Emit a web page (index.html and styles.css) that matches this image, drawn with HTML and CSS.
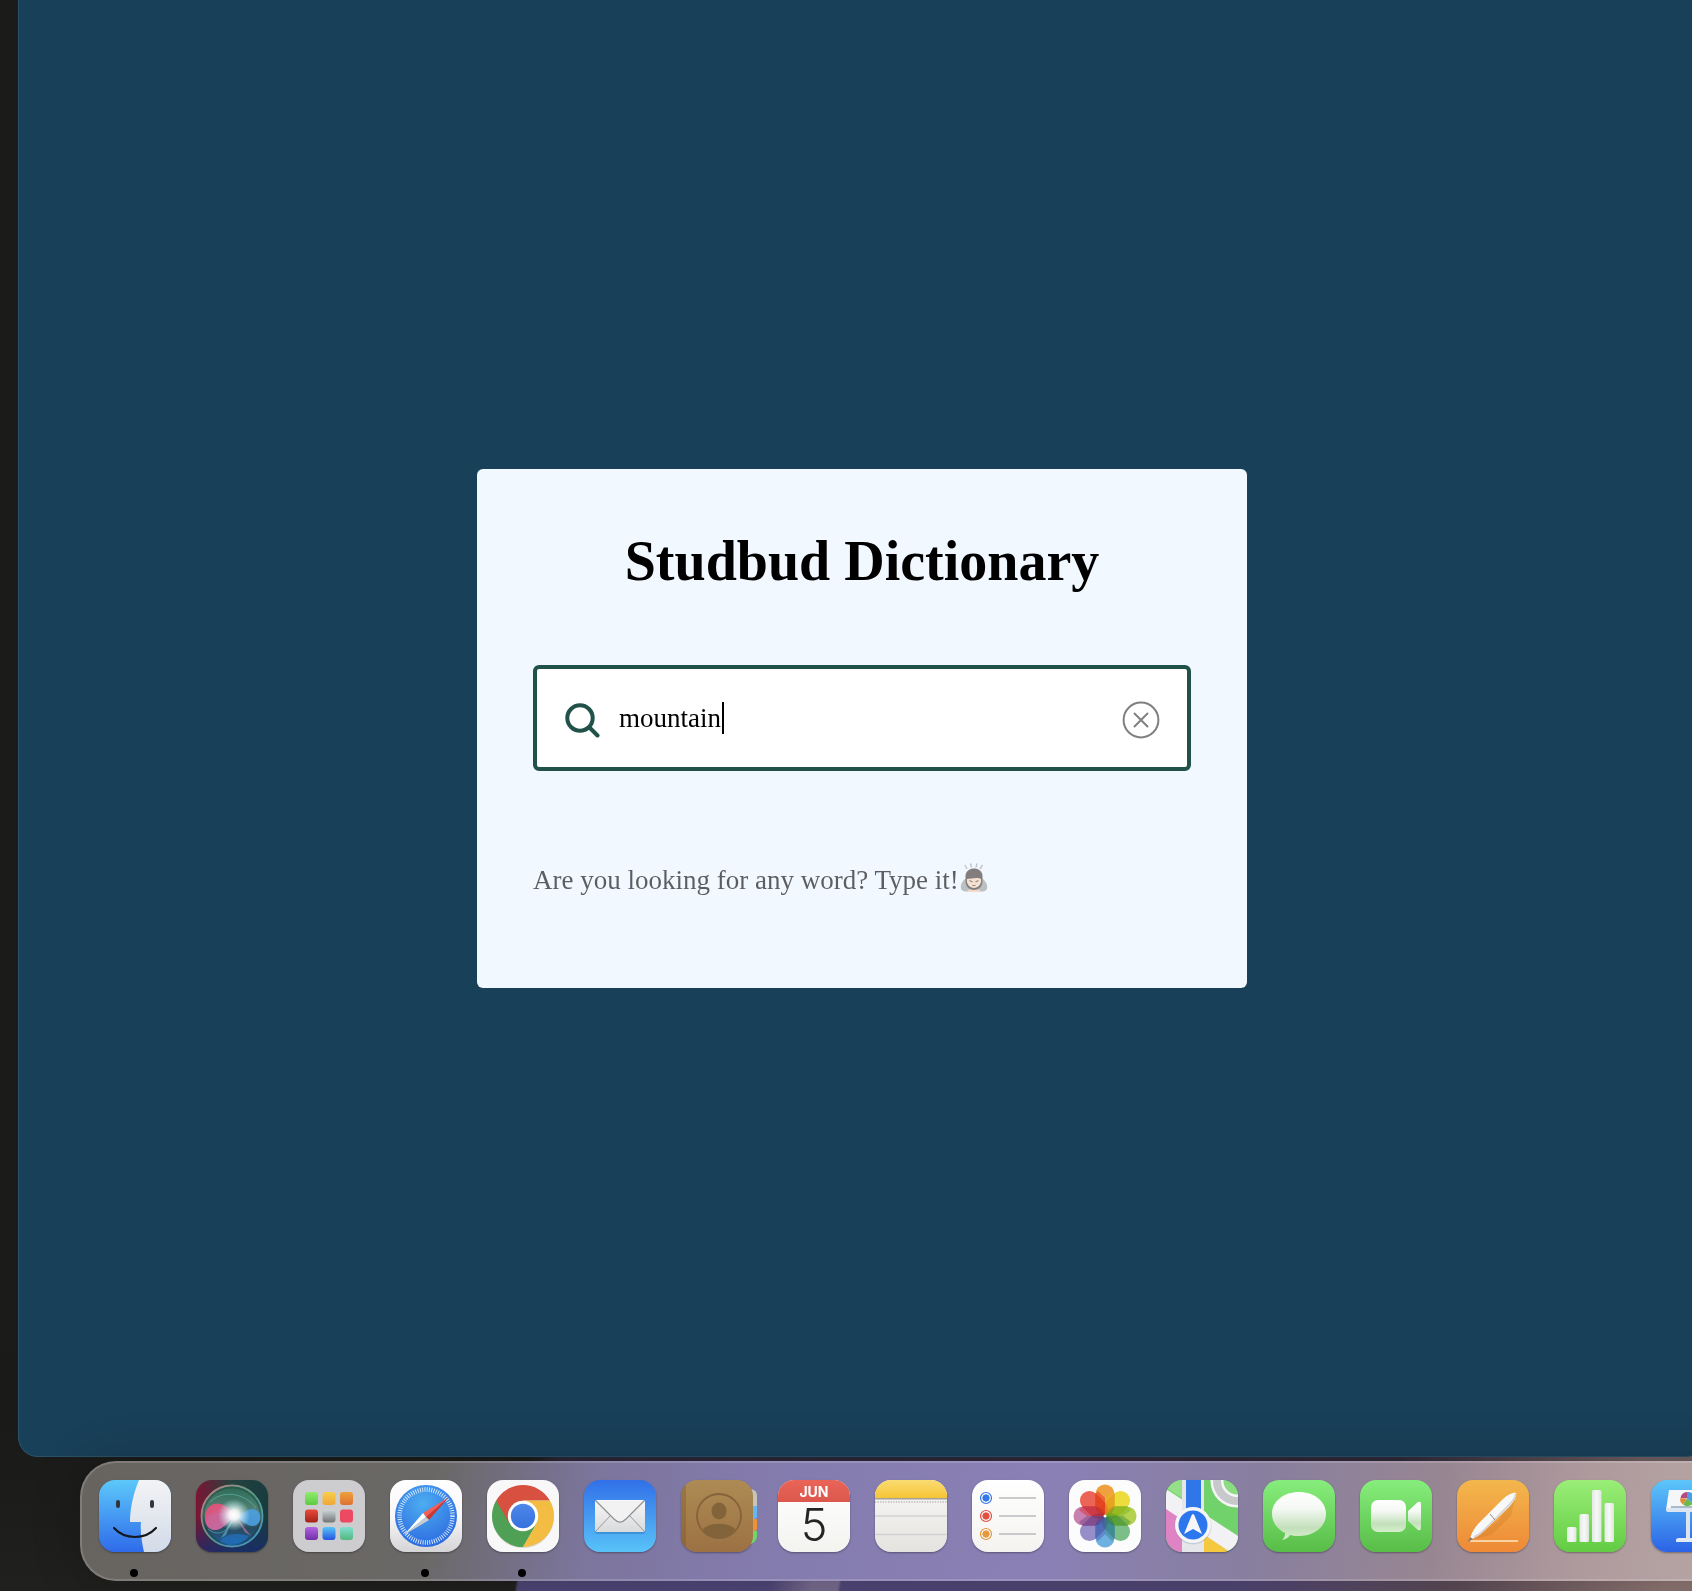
FILE: index.html
```html
<!DOCTYPE html>
<html lang="en">
<head>
<meta charset="utf-8">
<meta name="viewport" content="width=device-width, initial-scale=1">
<title>Studbud Dictionary</title>
<link rel="stylesheet" href="styles.css">
</head>
<body>
<main class="window">
  <section class="card">
    <h1 class="card-title">Studbud Dictionary</h1>
    <form class="search">
      <svg class="search-icon" viewBox="0 0 36 36" aria-hidden="true"><circle cx="15" cy="16" r="12.7"/><path d="M24.500 25.500 L32.500 33.500"/></svg>
      <div class="search-field">
        <input class="search-input" type="text" value="mountain" aria-label="Search a word" autocomplete="off" spellcheck="false">
        <span class="caret"></span>
      </div>
      <button class="clear" type="button" aria-label="Clear search">
        <svg class="clear-icon" viewBox="0 0 38 38" aria-hidden="true"><circle cx="19" cy="19" r="17.4"/><path d="M12.500 12.500 L25.500 25.500 M25.500 12.500 L12.500 25.500"/></svg>
      </button>
    </form>
    <p class="info">Are you looking for any word? Type it!<svg class="bow" viewBox="0 0 28 30" role="img" aria-label="person bowing"><path d="M5 2l2 4M10.500 .5l1 4M17 .5l-1 4M22.500 2l-2.500 4" stroke="#aaa" stroke-width="1.500" fill="none"/><path d="M1 26c-1-5 2-9 6-11h14c4 2 7 6 6 11-2 3-6 3-8 2h-10c-2 1-6 1-8-2z" fill="#9b9ea0"/><path d="M7 29c2-5 12-5 14 0z" fill="#f3c8aa"/><path d="M5.500 13c0-10 17-10 17 0v5c0 12-17 12-17 0z" fill="#40342f"/><path d="M7 16c3 0 11-2 14 0 1 5-3 9-7 9s-8-4-7-9z" fill="#f7d4b8"/><path d="M9.500 17.500l3 1.500M18.500 17.500l-3 1.500M12.500 22.500h3" stroke="#54443d" stroke-width="1.100"/></svg></p>
  </section>
</main>

<nav class="dock" aria-label="Dock">
  <button class="app running" aria-label="Finder"><svg class="icon" viewBox="0 0 72 72">
    <defs><linearGradient id="finderA" x2="0" y2="1"><stop stop-color="#5cc8fa"/><stop offset="1" stop-color="#2f6bea"/></linearGradient><linearGradient id="finderB" x2="0" y2="1"><stop stop-color="#f3f3f5"/><stop offset="1" stop-color="#d2dbe8"/></linearGradient></defs>
    <rect width="72" height="72" fill="url(#finderA)"/><path d="M40 0C35 12 31 27 31 42h11c-1 10 1 21 3 30h27V0z" fill="url(#finderB)"/>
    <path d="M19 22v4M53 22v4" stroke="#30363c" stroke-width="4" stroke-linecap="round"/><path d="M15 48c11 12 31 12 42 0" fill="none" stroke="#15181d" stroke-width="2.200" stroke-linecap="round"/>
  </svg></button>

  <button class="app" aria-label="Siri"><svg class="icon" viewBox="0 0 72 72">
    <defs><linearGradient id="siriA" x2="1" y2="0"><stop stop-color="#7c1434"/><stop offset=".5" stop-color="#25433e"/><stop offset="1" stop-color="#173b3f"/></linearGradient><linearGradient id="siriB" x2="0" y2="1"><stop offset=".5" stop-color="#172a60" stop-opacity="0"/><stop offset="1" stop-color="#182a70" stop-opacity=".8"/></linearGradient><radialGradient id="siriC"><stop stop-color="#fff"/><stop offset=".3" stop-color="#fff" stop-opacity=".9"/><stop offset="1" stop-color="#bdf3ff" stop-opacity="0"/></radialGradient><linearGradient id="siriD" x2="1" y2="1"><stop stop-color="#d3868e"/><stop offset=".5" stop-color="#61a68c"/><stop offset="1" stop-color="#4c9fe0"/></linearGradient><linearGradient id="siriE" x2="0" y2="1"><stop stop-color="#2c7058"/><stop offset=".45" stop-color="#5d8c7f"/><stop offset=".7" stop-color="#2a4f62"/><stop offset="1" stop-color="#1d65a8"/></linearGradient><linearGradient id="siriF" x2="1" y2="1"><stop stop-color="#f0476e"/><stop offset="1" stop-color="#c276b0"/></linearGradient></defs>
    <rect width="72" height="72" fill="url(#siriA)"/><rect width="72" height="72" fill="url(#siriB)"/>
    <circle cx="36" cy="36" r="30.500" fill="url(#siriE)" stroke="url(#siriD)" stroke-width="1.800" opacity=".9"/><circle cx="36" cy="36" r="28.500" fill="none" stroke="#183f3d" stroke-width="2" opacity=".4"/>
    <path d="M13 27c6-6 15-4 20 2l7 6c-6 4-12 15-21 15C8 50 6 34 13 27z" fill="url(#siriF)" opacity=".92"/><path d="M11 38c5-9 17-4 28-2-7 5-13 14-22 14-5-1-8-7-6-12z" fill="#c66ba5" opacity=".5"/>
    <path d="M39 36c8-1 11-7 17-7 11 0 11 16 1 17-7 0-11-6-18-10z" fill="#4d9fe0" opacity=".9"/><path d="M14 22c12-12 34-10 46 6M12 49c10 8 20 4 27-13" fill="none" stroke="#71d5c8" stroke-width="1" opacity=".45"/><path d="M39 36l16 20-6-4z" fill="#e678a9" opacity=".6"/><path d="M38 36L25 58l5-3z" fill="#71d5e8" opacity=".45"/>
    <path d="M24 61c6-7 16-9 29-5-8 10-20 12-29 5z" fill="#2374cc" opacity=".6"/><circle cx="38" cy="35" r="16" fill="url(#siriC)"/>
  </svg></button>

  <button class="app" aria-label="Launchpad"><svg class="icon" viewBox="0 0 72 72">
    <defs><linearGradient id="lp1" x2="0" y2="1"><stop stop-color="#91ec6d"/><stop offset="1" stop-color="#5bcb3f"/></linearGradient><linearGradient id="lp2" x2="0" y2="1"><stop stop-color="#f8cf4b"/><stop offset="1" stop-color="#f0a638"/></linearGradient><linearGradient id="lp3" x2="0" y2="1"><stop stop-color="#efa03b"/><stop offset="1" stop-color="#dd7231"/></linearGradient><linearGradient id="lp4" x2="0" y2="1"><stop stop-color="#ea4b3c"/><stop offset="1" stop-color="#a4231a"/></linearGradient><linearGradient id="lp5" x2="0" y2="1"><stop stop-color="#cfd7da"/><stop offset="1" stop-color="#727475"/></linearGradient><linearGradient id="lp7" x2="0" y2="1"><stop stop-color="#b463e4"/><stop offset="1" stop-color="#7030a8"/></linearGradient><linearGradient id="lp8" x2="0" y2="1"><stop stop-color="#55c5f8"/><stop offset="1" stop-color="#2655df"/></linearGradient><linearGradient id="lp9" x2="0" y2="1"><stop stop-color="#7edfd0"/><stop offset="1" stop-color="#54b77f"/></linearGradient></defs>
    <rect width="72" height="72" fill="#cdcdcf"/>
    <rect x="12" y="12" width="13" height="13" rx="3" fill="url(#lp1)"/><rect x="29.500" y="12" width="13" height="13" rx="3" fill="url(#lp2)"/><rect x="47" y="12" width="13" height="13" rx="3" fill="url(#lp3)"/>
    <rect x="12" y="29.500" width="13" height="13" rx="3" fill="url(#lp4)"/><rect x="29.500" y="29.500" width="13" height="13" rx="3" fill="url(#lp5)"/><rect x="47" y="29.500" width="13" height="13" rx="3" fill="#eb4a62"/>
    <rect x="12" y="47" width="13" height="13" rx="3" fill="url(#lp7)"/><rect x="29.500" y="47" width="13" height="13" rx="3" fill="url(#lp8)"/><rect x="47" y="47" width="13" height="13" rx="3" fill="url(#lp9)"/>
  </svg></button>

  <button class="app running" aria-label="Safari"><svg class="icon" viewBox="0 0 72 72">
    <defs><linearGradient id="white" x2="0" y2="1"><stop stop-color="#fff"/><stop offset=".5" stop-color="#f8f8f8"/><stop offset="1" stop-color="#d5d5d7"/></linearGradient><radialGradient id="safariB" cx=".45" cy=".3" r=".75"><stop stop-color="#4dadf0"/><stop offset="1" stop-color="#2a66df"/></radialGradient></defs>
    <rect width="72" height="72" fill="url(#white)"/><circle cx="36" cy="36" r="31" fill="url(#safariB)"/>
    <circle cx="36" cy="36" r="26.500" fill="none" stroke="#dceeff" stroke-width="4.500" stroke-dasharray=".9 1.412"/>
    <path d="M59 17L39 40l-4-4z" fill="#c93831"/><path d="M59 17L33 33l3 4z" fill="#f06159"/><path d="M14 55l19-22 3 4z" fill="#fff"/><path d="M14 55l22-18 3 3z" fill="#c9cdd2"/>
  </svg></button>

  <button class="app running" aria-label="Google Chrome"><svg class="icon" viewBox="0 0 72 72">
    <defs><linearGradient id="chromeB" x2="0" y2="1"><stop stop-color="#5087ea"/><stop offset="1" stop-color="#3472de"/></linearGradient></defs>
    <rect width="72" height="72" fill="#f8f8f8"/><circle cx="36" cy="37" r="31" fill="#d7d7d1"/>
    <path d="M36 36L9.150 20.500A31 31 0 0 1 62.850 20.500H36z" fill="#d85140"/><path d="M9.150 20.500A31 31 0 0 0 36 67L50 43 36 36z" fill="#4f9f55"/><path d="M62.850 20.500A31 31 0 0 1 36 67L49.400 43.800 36 20.500z" fill="#f2bd42"/><path d="M9.150 20.500L22.600 43.800 36 36 36 20.500z" fill="#d85140"/>
    <circle cx="36" cy="36" r="15.200" fill="#fff"/><circle cx="36" cy="36" r="12.200" fill="url(#chromeB)"/>
  </svg></button>

  <button class="app" aria-label="Mail"><svg class="icon" viewBox="0 0 72 72">
    <defs><linearGradient id="mailA" x2="0" y2="1"><stop stop-color="#3170e8"/><stop offset="1" stop-color="#59c3f8"/></linearGradient><linearGradient id="mailB" x2="0" y2="1"><stop stop-color="#f7f7f7"/><stop offset="1" stop-color="#d9dadc"/></linearGradient></defs>
    <rect width="72" height="72" fill="url(#mailA)"/><rect x="11" y="22" width="50" height="32" rx="2.500" fill="#236bb2" opacity=".4"/><rect x="11" y="20" width="50" height="32" rx="2.500" fill="url(#mailB)"/><path d="M12 51l14-15M60 51L46 36" stroke="#98999b" stroke-width="1"/><path d="M12 21l18 18q6 6 12 0l18-18z" fill="#f2f2f2"/><path d="M12 21l18 18q6 6 12 0l18-18" fill="none" stroke="#8e9092" stroke-width="1.200"/>
  </svg></button>

  <button class="app" aria-label="Contacts"><svg class="icon icon-open" viewBox="0 0 72 72">
    <defs><linearGradient id="book" x2="0" y2="1"><stop stop-color="#ad8b53"/><stop offset="1" stop-color="#9c7144"/></linearGradient></defs>
    <path d="M68 9c6 0 8 3 8 7v10h-8z" fill="#c7c4bb"/><path d="M68 26h8v10q0 3-3 3h-5z" fill="#62b9f1"/><path d="M68 39h8v9q0 3-3 3h-5z" fill="#ef9233"/><path d="M68 51h8v5q0 5-6 8h-2z" fill="#71d668"/>
    <rect width="72" height="72" rx="16" fill="url(#book)"/><path d="M5 5v62C1 64 0 60 0 56V16C0 11 2 7 5 5z" fill="#6d4b20" opacity=".3"/>
    <circle cx="38" cy="36" r="22" fill="none" stroke="#83633a" stroke-width="1.800"/><ellipse cx="38" cy="31" rx="7.500" ry="8.500" fill="#83633a"/><path d="M22 49c6-7 26-7 32 0-6 12-26 12-32 0z" fill="#83633a"/>
  </svg></button>

  <button class="app" aria-label="Calendar"><span class="icon calendar"><span class="calendar-month">JUN</span><span class="calendar-day">5</span></span></button>

  <button class="app" aria-label="Notes"><svg class="icon" viewBox="0 0 72 72">
    <defs><linearGradient id="noteA" x2="0" y2="1"><stop stop-color="#fadc73"/><stop offset="1" stop-color="#f6c435"/></linearGradient><linearGradient id="noteB" x2="0" y2="1"><stop stop-color="#f8f8f7"/><stop offset="1" stop-color="#e5e3df"/></linearGradient></defs>
    <rect width="72" height="72" fill="url(#noteB)"/><rect width="72" height="18" fill="url(#noteA)"/><path d="M0 18.700h72" stroke="#a5a297" stroke-width="1.400"/><path d="M0 22h72" stroke="#b9b9b7" stroke-width="1.500" stroke-dasharray="1.300 1.300"/><path d="M0 36h72M0 54.500h72" stroke="#d2d2d5" stroke-width="1.400"/>
  </svg></button>

  <button class="app" aria-label="Reminders"><svg class="icon" viewBox="0 0 72 72">
    <defs><linearGradient id="paper" x2="0" y2="1"><stop stop-color="#fff"/><stop offset="1" stop-color="#f4f3f0"/></linearGradient></defs>
    <rect width="72" height="72" fill="url(#paper)"/>
    <g fill="#3478e8" stroke="#3478e8"><circle cx="14" cy="18" r="3.200"/><circle cx="14" cy="18" r="5.500" fill="none" stroke-width="1.200"/></g><g fill="#e44e40" stroke="#e44e40"><circle cx="14" cy="36" r="3.200"/><circle cx="14" cy="36" r="5.500" fill="none" stroke-width="1.200"/></g><g fill="#e6983c" stroke="#e6983c"><circle cx="14" cy="54" r="3.200"/><circle cx="14" cy="54" r="5.500" fill="none" stroke-width="1.200"/></g>
    <path d="M27 18h37M27 36h37M27 54h37" stroke="#bababe" stroke-width="1.500"/>
  </svg></button>

  <button class="app" aria-label="Photos"><svg class="icon" viewBox="0 0 72 72">
    <rect width="72" height="72" fill="#fcfcfc"/>
    <g class="petals"><rect x="26.500" y="4.500" width="19" height="31.500" rx="9.500" fill="#f2a33f"/><rect x="26.500" y="4.500" width="19" height="31.500" rx="9.500" fill="#f0e03c" transform="rotate(45 36 36)"/><rect x="26.500" y="4.500" width="19" height="31.500" rx="9.500" fill="#b6d451" transform="rotate(90 36 36)"/><rect x="26.500" y="4.500" width="19" height="31.500" rx="9.500" fill="#7cc189" transform="rotate(135 36 36)"/><rect x="26.500" y="4.500" width="19" height="31.500" rx="9.500" fill="#6fb2e3" transform="rotate(180 36 36)"/><rect x="26.500" y="4.500" width="19" height="31.500" rx="9.500" fill="#9790cb" transform="rotate(225 36 36)"/><rect x="26.500" y="4.500" width="19" height="31.500" rx="9.500" fill="#ca82b1" transform="rotate(270 36 36)"/><rect x="26.500" y="4.500" width="19" height="31.500" rx="9.500" fill="#ee6556" transform="rotate(315 36 36)"/></g>
    <g opacity=".65"><path d="M36 36V18l-7-7-3 3v12z" fill="#e8492c"/><path d="M36 36V18l7-7 3 3v12z" fill="#eab12c"/><path d="M36 36l10-10h12l4 4-8 6z" fill="#8cbe2c"/><path d="M36 36h18l8 6-4 4H46z" fill="#5ca447"/><path d="M36 36l10 10v12l-3 3-7-7z" fill="#4890a0"/><path d="M36 36v18l-7 7-3-3V46z" fill="#5b70bd"/><path d="M36 36L26 46H14l-4-4 8-6z" fill="#895294"/><path d="M36 36H18l-8-6 4-4h12z" fill="#d73f4f"/></g><circle cx="36" cy="36" r="1.500" fill="#fff"/>
  </svg></button>

  <button class="app" aria-label="Maps"><svg class="icon" viewBox="0 0 72 72">
    <rect width="72" height="72" fill="#71d26b"/><path d="M0 0h16v18L0 8z" fill="#94df87"/><path d="M0 27l18 12v33H0z" fill="#df83c4"/><path d="M38 54l26 18H38z" fill="#f5c840"/>
    <path d="M0 9l72 47v16H64L0 29z" fill="#f2f2f4"/><path d="M16 0h22v72H16z" fill="#e5e6ea"/><path d="M20 0h15v36H20z" fill="#2f76e9"/><path d="M38 60l20 12H38z" fill="#f5c840"/>
    <circle cx="71" cy="1" r="20" fill="#8cdd82" stroke="#f5f5f5" stroke-width="13"/><circle cx="71" cy="1" r="20" fill="none" stroke="#c6c8cc" stroke-width="8"/>
    <circle cx="27" cy="46" r="18.500" fill="#8997a5" opacity=".35"/><circle cx="27" cy="45" r="18" fill="#f4f5f7"/><circle cx="27" cy="45" r="14.500" fill="#2c77ed"/><path d="M27 34q1 0 1.500 1.500L36 54l-9-5-9 5 7.500-18.500Q26 34 27 34z" fill="#f6f6f6"/>
  </svg></button>

  <button class="app" aria-label="Messages"><svg class="icon" viewBox="0 0 72 72">
    <defs><linearGradient id="green" x2="0" y2="1"><stop stop-color="#87ee7d"/><stop offset="1" stop-color="#58bd47"/></linearGradient><linearGradient id="bubble" x2="0" y2="1"><stop stop-color="#fff"/><stop offset=".35" stop-color="#f4f8f3"/><stop offset=".75" stop-color="#c2e0ba"/><stop offset="1" stop-color="#d5f0cc"/></linearGradient></defs>
    <rect width="72" height="72" fill="url(#green)"/><path d="M36 12c15 0 27 9 27 22S51 56 36 56c-3 0-6 0-9-1-2 3-4 4-8 5 3-3 3-5 3-7C14 49 9 42 9 34c0-13 12-22 27-22z" fill="url(#bubble)"/>
  </svg></button>

  <button class="app" aria-label="FaceTime"><svg class="icon" viewBox="0 0 72 72">
    <rect width="72" height="72" fill="url(#green)"/><rect x="11" y="20" width="35" height="32" rx="7" fill="url(#bubble)"/><path d="M48 31l10-9q3-1 3 2v24q0 3-3 2l-10-9z" fill="url(#bubble)"/>
  </svg></button>

  <button class="app" aria-label="Pages"><svg class="icon" viewBox="0 0 72 72">
    <defs><linearGradient id="orange" x2="0" y2="1"><stop stop-color="#f3b74c"/><stop offset="1" stop-color="#ee8937"/></linearGradient></defs>
    <rect width="72" height="72" fill="url(#orange)"/><path d="M13 61h48" stroke="#fad2a1" stroke-width="2"/><path d="M17 59l23-17 18-23-4 17-20 19z" fill="#b9681b" opacity=".2"/><path d="M12 61l3-8c2-4 4-7 8-11l22-22c6-6 12-8 14-7 1 3-2 9-7 14L29 49c-4 4-7 7-12 9z" fill="#f8f8f8"/><path d="M17 57c4-2 8-5 12-9l22-22c5-5 8-10 7-12" fill="none" stroke="#d1d1d3" stroke-width="1.500"/><path d="M33 34l5 6" stroke="#8c8986" stroke-width="1"/><path d="M11 62l2-5 3 2z" fill="#8a7967"/>
  </svg></button>

  <button class="app" aria-label="Numbers"><svg class="icon" viewBox="0 0 72 72">
    <defs><linearGradient id="lime" x2="0" y2="1"><stop stop-color="#9aee77"/><stop offset="1" stop-color="#62cc43"/></linearGradient><linearGradient id="bar"><stop stop-color="#e2eae1"/><stop offset=".5" stop-color="#f8f8fa"/><stop offset="1" stop-color="#dce6da"/></linearGradient></defs>
    <rect width="72" height="72" fill="url(#lime)"/><g fill="url(#bar)"><rect x="13" y="47" width="9.500" height="15" rx="1.500"/><rect x="25.500" y="34" width="9.500" height="28" rx="1.500"/><rect x="38" y="10" width="9.500" height="52" rx="1.500"/><rect x="50.500" y="23" width="9.500" height="39" rx="1.500"/></g>
  </svg></button>

  <button class="app" aria-label="Keynote"><svg class="icon" viewBox="0 0 72 72">
    <defs><linearGradient id="sky" x2="0" y2="1"><stop stop-color="#5cc6fa"/><stop offset="1" stop-color="#2b63e6"/></linearGradient></defs>
    <rect width="72" height="72" fill="url(#sky)"/><path d="M35 32h4v28h-4z" fill="#dbe4ef"/><path d="M25 60q0-2 3-2h18q3 0 3 2v2H25z" fill="#e4e9f2"/><path d="M18 10h38l3 20H15z" fill="#f5f6f8"/><path d="M15 28h44v2q0 2-2 2H17q-2 0-2-2z" fill="#dbe6f2"/><path d="M20 27h34" stroke="#90a7b6" stroke-width="1.500"/>
    <path d="M36 18V12a6.500 6.500 0 0 0-6.500 6.500z" fill="#b34a80"/><path d="M36 18.500h-7a7 7 0 0 0 3 6z" fill="#e58a39"/><path d="M36 18.500l-4 6a7 7 0 0 0 10-1z" fill="#69bb4d"/><path d="M36 12v6.500l6 5a7 7 0 0 0-6-11.500z" fill="#4b9de8"/>
  </svg></button>
</nav>
</body>
</html>
```
FILE: styles.css
```css
* {
  box-sizing: border-box;
}

body {
  margin: 0;
  min-height: 100vh;
  display: flex;
  flex-direction: column;
  gap: 4px;
  padding-bottom: 10px;
  overflow-x: hidden;
  font-family: "Liberation Serif", "Times New Roman", serif;
  background:
    linear-gradient(100deg, transparent 508px, #4d4676 511px, #504778 760px, #786b8e 800px, #786b8e 826px, #504778 829px, #514775 1220px, #5b4a56 1430px, #8d7572 1640px) bottom / 100% 10px no-repeat,
    linear-gradient(90deg, transparent 530px, #2b2638 560px, #302839 1400px, #705e61 1640px) 0 calc(100% - 130px) / 100% 5px no-repeat,
    linear-gradient(#1b1b1a, #1a1a18 90%, #20201f);
}

.window {
  flex: 1;
  display: flex;
  align-items: center;
  justify-content: center;
  margin-left: 18px;
  margin-right: -14px;
  background: #194059;
  border: 1px solid #2a5169;
  border-top: 0;
  border-radius: 0 0 20px 20px;
}

.card {
  width: 770px;
  max-width: 100%;
  padding: 56px 56px 92px;
  background: #f1f8ff;
  border-radius: 6px;
}

.card-title {
  margin: 0 0 68px;
  font-size: 56px;
  line-height: 72px;
  text-align: center;
  color: #000;
}

.search {
  display: flex;
  align-items: center;
  height: 106px;
  padding: 0 27px 0 28px;
  background: #fff;
  border: 4px solid #20524a;
  border-radius: 6px;
}

.search-icon {
  flex: none;
  width: 36px;
  height: 36px;
  margin-top: 4px;
  fill: none;
  stroke: #20524a;
  stroke-width: 4;
  stroke-linecap: round;
}

.search-field {
  position: relative;
  flex: 1;
  margin-left: 18px;
}

.search-input {
  display: block;
  width: 100%;
  height: 32px;
  padding: 0;
  border: 0;
  outline: 0;
  background: none;
  font-family: inherit;
  font-size: 27px;
  line-height: 32px;
  color: #000;
}

.caret {
  position: absolute;
  top: 0;
  left: 103px;
  width: 2px;
  height: 32px;
  background: #000;
}

.clear {
  flex: none;
  width: 38px;
  height: 38px;
  margin-top: 4px;
  padding: 0;
  border: 0;
  background: none;
}

.clear-icon {
  display: block;
  fill: none;
  stroke: #808080;
  stroke-width: 2;
  stroke-linecap: round;
}

.info {
  margin: 93px 0 0;
  font-size: 27px;
  line-height: 32px;
  color: #000;
  opacity: 0.62;
}

.bow {
  width: 28px;
  height: 30px;
  margin: -4px 0 -4px 1px;
  vertical-align: 0;
}

.dock {
  position: relative;
  display: flex;
  gap: 25px;
  height: 120px;
  margin-left: 80px;
  margin-right: -60px;
  padding: 17px;
  border: 2px solid rgba(255, 255, 255, 0.16);
  border-radius: 36px;
  background: linear-gradient(100deg, #676460 0, #6a6866 350px, #7c759c 510px, #847bad 680px, #8a80b5 960px, #887f9f 1170px, #988692 1350px, #ae9a9d 1490px, #b7a5a4 1640px) border-box;
  box-shadow: 0 0 48px rgba(0, 0, 0, 0.22);
}

.app {
  position: relative;
  flex: none;
  width: 72px;
  height: 72px;
  padding: 0;
  border: 0;
  background: none;
}

.running::after {
  content: "";
  position: absolute;
  left: 31px;
  bottom: -25px;
  width: 8px;
  height: 8px;
  border-radius: 50%;
  background: #000;
}

.icon {
  display: block;
  width: 72px;
  height: 72px;
  overflow: hidden;
  border-radius: 16px;
  box-shadow: 0 1px 2px rgba(0, 0, 0, 0.35);
}

.icon-open {
  overflow: visible;
}

.petals rect {
  mix-blend-mode: multiply;
}

.calendar {
  display: flex;
  flex-direction: column;
  background: linear-gradient(#fff, #f3f3f0);
  font-family: Inter, "Liberation Sans", sans-serif;
  text-align: center;
}

.calendar-month {
  height: 22px;
  background: linear-gradient(#ea6558, #dc574c);
  font-size: 14px;
  line-height: 24px;
  font-weight: 700;
  color: #fff;
}

.calendar-day {
  font-size: 45px;
  line-height: 46px;
  font-weight: 300;
  color: #252525;
}
```
